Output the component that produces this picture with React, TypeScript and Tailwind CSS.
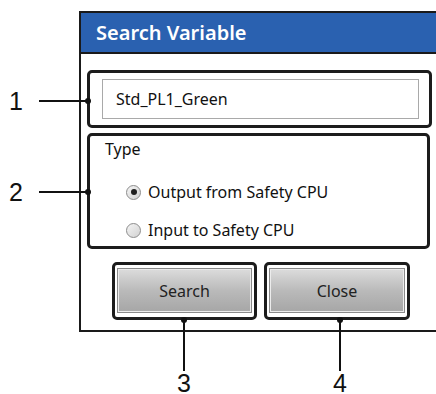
function Radio({ checked, label }: { checked?: boolean; label: string }) {
  return (
    <div className="flex items-center gap-[7px]">
      <div className="flex h-[15px] w-[15px] items-center justify-center rounded-full border border-[#8c8c8c] bg-linear-to-br from-[#f4f4f4] to-[#d2d2d2]">
        {checked && <div className="h-[6px] w-[6px] rounded-full bg-[#1e1e1e]" />}
      </div>
      <span>{label}</span>
    </div>
  );
}

function Button({ text }: { text: string }) {
  return (
    <div className="h-[58px] rounded-[5px] border-[3px] border-[#1c1c1c] px-[2px] pt-[3px] pb-[4px]">
      <div className="flex h-full w-full items-center justify-center border border-[#8a8a8a] bg-linear-to-b from-[#dcdcdc] via-[#bababa] to-[#a6a6a6] shadow-[inset_0_0_0_1px_#ececec] text-[16px] text-[#222]">
        {text}
      </div>
    </div>
  );
}

// horizontal leader: number, line, dot
function SideCallout({ n, className }: { n: string; className: string }) {
  return (
    <div className={`absolute flex items-center ${className}`}>
      <span className="w-[39px] pl-[9px] font-['Liberation_Sans',Arial,sans-serif] text-[25px] leading-[26px] text-[#111]">
        {n}
      </span>
      <div className="h-[2px] w-[47px] bg-[#111]" />
      <div className="-ml-[1px] h-[6px] w-[6px] rounded-full bg-[#111]" />
    </div>
  );
}

// vertical leader: dot, line, number
function BottomCallout({ n, className }: { n: string; className: string }) {
  return (
    <div className={`absolute flex w-[20px] flex-col items-center ${className}`}>
      <div className="h-[6px] w-[6px] rounded-full bg-[#111]" />
      <div className="-mt-[1px] h-[49px] w-[2px] bg-[#111]" />
      <span className="mt-[2px] font-['Liberation_Sans',Arial,sans-serif] text-[25px] leading-[20px] text-[#111]">
        {n}
      </span>
    </div>
  );
}

export default function App() {
  return (
    <div className="relative h-[394px] w-[436px] overflow-hidden bg-white font-['Noto_Sans',sans-serif]">
      <div className="ml-[79px] mt-[11px] w-[400px] border-y-2 border-l-2 border-[#1a1a1a] bg-white">
        <div className="flex h-[41px] items-center border-b-2 border-[#1a1a1a] bg-[#2a61b0] pl-[15px] text-[20px] font-semibold text-white">
          Search Variable
        </div>
        <div className="flex flex-col pb-[10px] pl-[6px] pt-[16px]">
          <div className="h-[58px] w-[345px] rounded-[5px] border-[3px] border-[#1c1c1c] pb-[3px] pl-[12px] pr-[10px] pt-[6px]">
            <div className="flex h-[40px] items-center border border-[#a9a9a9] pl-[13px] text-[16px] text-[#111]">
              Std_PL1_Green
            </div>
          </div>
          <div className="mt-[5px] flex h-[116px] w-[343px] flex-col rounded-[5px] border-[3px] border-[#1c1c1c] pl-[15px] pt-[2px] text-[16px] leading-[22px] text-[#111]">
            <div>Type</div>
            <div className="ml-[21px] mt-[21px] flex flex-col gap-[16px]">
              <Radio checked label="Output from Safety CPU" />
              <Radio label="Input to Safety CPU" />
            </div>
          </div>
          <div className="ml-[25px] mt-[13px] flex gap-[7px]">
            <div className="w-[145px]">
              <Button text="Search" />
            </div>
            <div className="w-[146px]">
              <Button text="Close" />
            </div>
          </div>
        </div>
      </div>

      <SideCallout n="1" className="left-0 top-[88px]" />
      <SideCallout n="2" className="left-0 top-[179px]" />
      <BottomCallout n="3" className="left-[174px] top-[317px]" />
      <BottomCallout n="4" className="left-[330px] top-[317px]" />
    </div>
  );
}
